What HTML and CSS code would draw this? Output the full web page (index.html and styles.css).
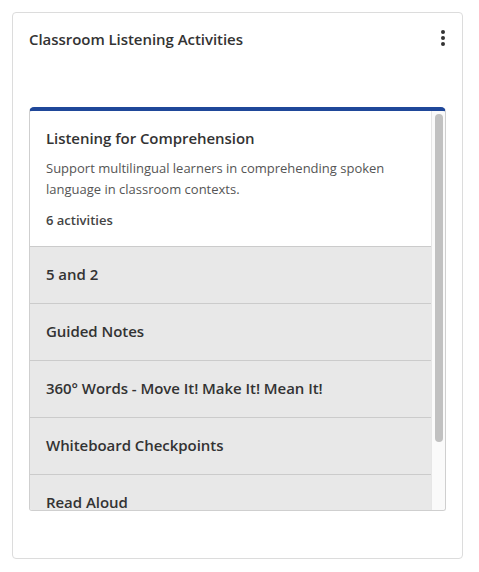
FILE: index.html
```html
<!DOCTYPE html>
<html lang="en">
<head>
  <meta charset="UTF-8">
  <title>Classroom Listening Activities</title>
  <link rel="stylesheet" href="styles.css">
</head>
<body>
  <div class="card">
    <div class="card-head">
      <div class="card-title">Classroom Listening Activities</div>
      <button class="menu" aria-label="More options">
        <svg width="6" height="18" viewBox="0 0 6 18">
          <circle cx="3" cy="3" r="2" fill="#333"/>
          <circle cx="3" cy="9" r="2" fill="#333"/>
          <circle cx="3" cy="15" r="2" fill="#333"/>
        </svg>
      </button>
    </div>

    <div class="collection">
      <div class="list">
        <div class="intro">
          <div class="intro-title">Listening for Comprehension</div>
          <p class="intro-desc">Support multilingual learners in comprehending spoken language in classroom contexts.</p>
          <div class="intro-count">6 activities</div>
        </div>
        <div class="item">5 and 2</div>
        <div class="item">Guided Notes</div>
        <div class="item">360° Words - Move It! Make It! Mean It!</div>
        <div class="item">Whiteboard Checkpoints</div>
        <div class="item">Read Aloud</div>
        <div class="item">Listen and Sketch</div>
      </div>
      <div class="scrollbar">
        <div class="thumb"></div>
      </div>
    </div>
  </div>
</body>
</html>
```

FILE: styles.css
```css
body {
  margin: 0;
  background: #fff;
  font-family: "Open Sans", Lato, sans-serif;
  color: #333;
}

.card {
  margin: 12px;
  width: 451px;
  height: 547px;
  box-sizing: border-box;
  border: 1px solid #dcdcdc;
  border-radius: 4px;
  padding: 16px 16px 47px 16px;
}

.card-head {
  display: flex;
  justify-content: space-between;
  align-items: flex-start;
  height: 78px;
}

.card-title {
  font-size: 15px;
  font-weight: 600;
  line-height: 20px;
  color: #333;
  letter-spacing: -0.05px;
}

.menu {
  background: none;
  border: 0;
  padding: 0;
  margin: 0;
  width: 6px;
  height: 18px;
  cursor: pointer;
}

.menu svg {
  display: block;
}

.collection {
  display: flex;
  width: 417px;
  height: 404px;
  box-sizing: border-box;
  border: 1px solid #cfcfcf;
  border-top: 4px solid #1f4799;
  border-radius: 5px 5px 3px 3px;
  overflow: hidden;
}

.list {
  flex: 1;
  overflow: hidden;
}

.scrollbar {
  width: 14px;
  flex: none;
  background: #fafafa;
  border-left: 1px solid #e6e6e6;
  padding: 3px 0 0 3px;
  box-sizing: border-box;
}

.thumb {
  width: 8px;
  height: 328px;
  background: #c1c1c1;
  border-radius: 4px;
}

.intro {
  background: #fff;
  padding: 17px 16px 0 16px;
  height: 135px;
  box-sizing: border-box;
}

.intro-title {
  font-size: 15px;
  font-weight: 600;
  line-height: 20px;
  letter-spacing: -0.05px;
}

.intro-desc {
  margin: 10px 0 0 0;
  font-size: 13px;
  line-height: 21px;
  color: #555;
}

.intro-count {
  margin-top: 11px;
  font-size: 13px;
  font-weight: 600;
  line-height: 18px;
  color: #444;
}

.item {
  background: #e8e8e8;
  border-top: 1px solid #cbcbcb;
  height: 57px;
  box-sizing: border-box;
  padding: 0 16px 3px 16px;
  display: flex;
  align-items: center;
  font-size: 15px;
  font-weight: 600;
  letter-spacing: -0.05px;
  color: #333;
}
```
